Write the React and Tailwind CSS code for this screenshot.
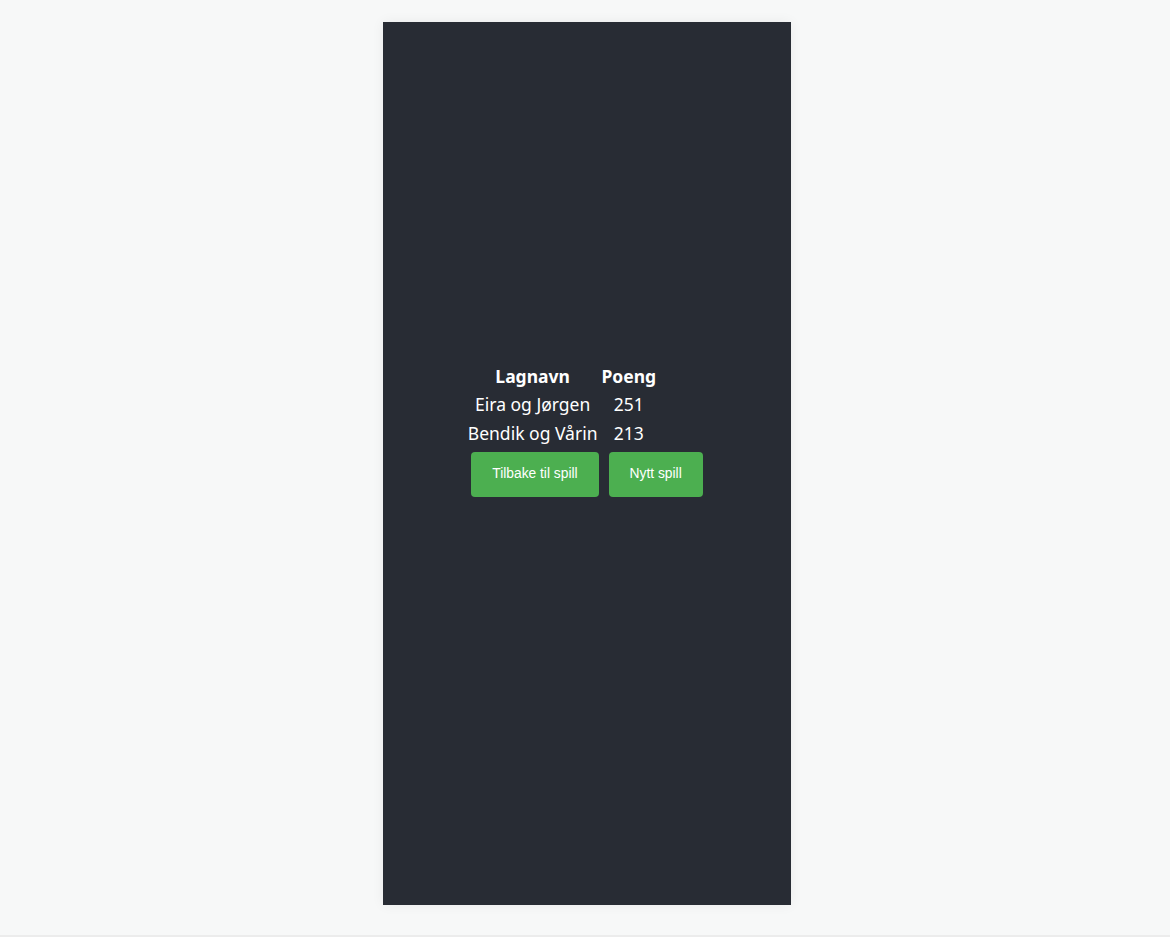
import React from 'react';

const teams = [
    { name: 'Eira og Jørgen', points: 251 },
    { name: 'Bendik og Vårin', points: 213 },
];

export default function App() {
    return (
        <div className="min-h-[937px] bg-[#f7f8f8] border-b-2 border-[#ececec] flex justify-center pt-[22px] pb-[30px] box-border">
            <div className="ml-[4px] w-[408px] h-[883px] bg-[#282c34] shadow-[0_0_12px_rgba(0,0,0,0.06)] flex flex-col items-center justify-center pb-[64px] text-white">
                <table className="mr-[50px] text-center text-[17.5px] leading-[24.5px] border-separate border-spacing-[2px] font-['Noto_Sans',sans-serif]">
                    <thead>
                        <tr>
                            <th className="px-[1px] py-[1px] font-bold">Lagnavn</th>
                            <th className="px-[1px] py-[1px] font-bold">Poeng</th>
                        </tr>
                    </thead>
                    <tbody>
                        {teams.map((t) => (
                            <tr key={t.name}>
                                <td className="px-[1px] py-[1px]">{t.name}</td>
                                <td className="px-[1px] py-[1px]">{t.points}</td>
                            </tr>
                        ))}
                    </tbody>
                </table>
                <div className="flex -mt-[1px] font-['Liberation_Sans',Arial,sans-serif] text-[13.8px]">
                    <button className="m-[5px] h-[45px] px-[21px] bg-[#4caf50] text-white rounded-[4px]">Tilbake til spill</button>
                    <button className="m-[5px] h-[45px] px-[21px] bg-[#4caf50] text-white rounded-[4px]">Nytt spill</button>
                </div>
            </div>
        </div>
    );
}
